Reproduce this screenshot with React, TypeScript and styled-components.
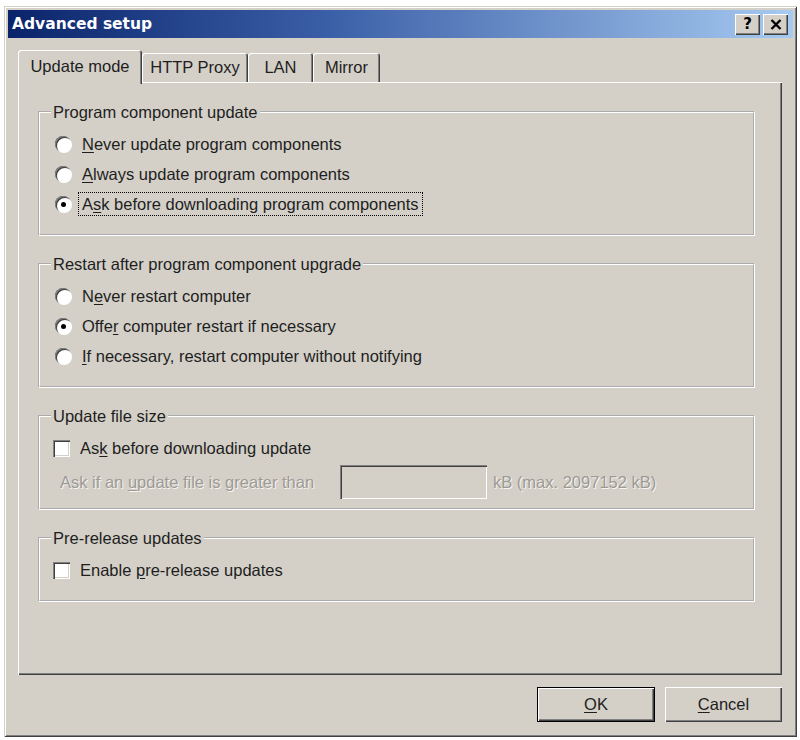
import styled, { createGlobalStyle } from 'styled-components';

const face = '#d4d0c8';
const light = '#ffffff';
const shadow = '#808080';
const darkShadow = '#404040';
const ink = '#1e1e1e';
const grayed = '#9d9a94';

const raised = `inset 1px 1px 0 ${light}, inset -1px -1px 0 ${darkShadow}, inset -2px -2px 0 ${shadow}`;
const sunken = `inset 1px 1px 0 ${shadow}, inset 2px 2px 0 ${darkShadow}, inset -1px -1px 0 ${light}, inset -2px -2px 0 ${face}`;

const GlobalStyle = createGlobalStyle`
  body {
    margin: 0;
    background: #fff;
    font-family: 'Liberation Sans', Arial, sans-serif;
  }
`;

const Page = styled.div`
  padding: 6px 0 0 4px;
`;

const Window = styled.div`
  width: 793px;
  height: 731px;
  box-sizing: border-box;
  padding: 4px;
  display: flex;
  flex-direction: column;
  background: ${face};
  box-shadow: inset 1px 1px 0 ${face}, inset -1px -1px 0 ${darkShadow},
    inset 2px 2px 0 ${light}, inset -2px -2px 0 ${shadow};
`;

const TitleBar = styled.div`
  height: 28px;
  display: flex;
  align-items: center;
  padding: 0 5px 0 4px;
  background: linear-gradient(to right, #0a246a 0%, #3a5ea6 40%, #a6caf0 100%);
`;

const Title = styled.span`
  flex: 1;
  color: #fff;
  font-family: 'DejaVu Sans', Verdana, sans-serif;
  font-weight: bold;
  font-size: 15.5px;
`;

const CaptionButtons = styled.div`
  display: flex;
  gap: 3px;
`;

const CaptionButton = styled.button`
  width: 25px;
  height: 21px;
  padding: 0;
  border: 0;
  display: flex;
  align-items: center;
  justify-content: center;
  background: ${face};
  box-shadow: ${raised};
  color: #000;
  font-family: 'DejaVu Sans', Verdana, sans-serif;
  font-weight: bold;
  font-size: 15px;
`;

const Body = styled.div`
  flex: 1;
  display: flex;
  flex-direction: column;
  padding: 12px 11px 0 10px;
`;

const TabRow = styled.div`
  display: flex;
  align-items: flex-end;
  height: 32px;
`;

const Tab = styled.div<{ $width: number; $active?: boolean }>`
  position: relative;
  z-index: ${(p) => (p.$active ? 1 : 0)};
  width: ${(p) => p.$width}px;
  height: ${(p) => (p.$active ? 34 : 29)}px;
  margin-bottom: ${(p) => (p.$active ? -2 : 0)}px;
  padding-bottom: ${(p) => (p.$active ? 2 : 0)}px;
  box-sizing: border-box;
  display: flex;
  align-items: center;
  justify-content: center;
  background: ${face};
  border-radius: 3px 3px 0 0;
  box-shadow: inset 1px 1px 0 ${light}, inset -1px 0 0 ${darkShadow}, inset -2px 0 0 ${shadow};
  font-size: 16.5px;
  color: ${ink};
`;

const Panel = styled.div`
  height: 593px;
  box-sizing: border-box;
  padding: 20px 27px 0 20px;
  display: flex;
  flex-direction: column;
  gap: 18px;
  box-shadow: ${raised};
`;

const Group = styled.fieldset<{ $padBottom?: number }>`
  margin: 0;
  min-width: 0;
  padding: 7px 15px ${(p) => p.$padBottom ?? 15}px 15px;
  border: 2px groove #fff;
`;

const Legend = styled.legend`
  margin-left: -4px;
  padding: 0 2px;
  line-height: 20px;
  font-size: 16.5px;
  color: ${ink};
`;

const OptionRow = styled.label`
  display: flex;
  align-items: center;
  height: 30px;
`;

const Radio = styled.span<{ $checked?: boolean }>`
  width: 16px;
  height: 16px;
  flex-shrink: 0;
  border-radius: 50%;
  display: flex;
  align-items: center;
  justify-content: center;
  background: #fff;
  box-shadow: inset 1px 1px 0 ${shadow}, inset 2px 2px 0 ${darkShadow}, 1px 1px 0 ${light};

  &::after {
    content: '';
    width: 5px;
    height: 5px;
    border-radius: 50%;
    background: ${(p) => (p.$checked ? '#000' : 'transparent')};
  }
`;

const Checkbox = styled.span`
  width: 17px;
  height: 17px;
  margin-left: -2px;
  flex-shrink: 0;
  background: #fff;
  box-shadow: ${sunken};
`;

const Caption = styled.span<{ $focused?: boolean; $gap: number }>`
  margin-left: ${(p) => p.$gap}px;
  padding: 1px 3px;
  line-height: 20px;
  border: 1px dotted ${(p) => (p.$focused ? '#000' : 'transparent')};
  font-size: 16.5px;
  color: ${ink};
  white-space: nowrap;
`;

const Key = styled.u`
  text-decoration: underline;
  text-underline-offset: 2px;
`;

const ThresholdRow = styled.div`
  display: flex;
  align-items: center;
  height: 34px;
  margin-top: 2px;
`;

const GrayText = styled.span<{ $width?: number }>`
  ${(p) => (p.$width ? `width: ${p.$width}px; padding-left: 5px; box-sizing: border-box;` : 'margin-left: 6px;')}
  font-size: 16.5px;
  color: ${grayed};
  text-shadow: 1px 1px 0 rgba(255, 255, 255, 0.8);
  white-space: nowrap;
`;

const SizeInput = styled.div`
  width: 147px;
  height: 34px;
  background: ${face};
  box-shadow: ${sunken};
`;

const ButtonRow = styled.div`
  display: flex;
  justify-content: flex-end;
  gap: 10px;
  margin-top: 12px;
`;

const DialogButton = styled.button<{ $default?: boolean }>`
  width: ${(p) => (p.$default ? 118 : 117)}px;
  height: 35px;
  padding: 0;
  border: ${(p) => (p.$default ? '1px solid #000' : '0')};
  background: ${face};
  box-shadow: ${raised};
  font-family: 'Liberation Sans', Arial, sans-serif;
  font-size: 16.5px;
  color: ${ink};
`;

type Option = { before: string; key: string; after: string; checked?: boolean; focused?: boolean };

const programOptions: Option[] = [
  { before: '', key: 'N', after: 'ever update program components' },
  { before: '', key: 'A', after: 'lways update program components' },
  { before: 'A', key: 's', after: 'k before downloading program components', checked: true, focused: true },
];

const restartOptions: Option[] = [
  { before: 'N', key: 'e', after: 'ver restart computer' },
  { before: 'Offe', key: 'r', after: ' computer restart if necessary', checked: true },
  { before: '', key: 'I', after: 'f necessary, restart computer without notifying' },
];

const tabs = [
  { label: 'Update mode', width: 124, active: true },
  { label: 'HTTP Proxy', width: 106 },
  { label: 'LAN', width: 65 },
  { label: 'Mirror', width: 67 },
];

const RadioList = ({ options }: { options: Option[] }) => (
  <>
    {options.map((o) => (
      <OptionRow key={o.after}>
        <Radio $checked={o.checked} />
        <Caption $gap={7} $focused={o.focused}>
          {o.before}
          <Key>{o.key}</Key>
          {o.after}
        </Caption>
      </OptionRow>
    ))}
  </>
);

const App = () => (
  <>
    <GlobalStyle />
    <Page>
      <Window>
        <TitleBar>
          <Title>Advanced setup</Title>
          <CaptionButtons>
            <CaptionButton>?</CaptionButton>
            <CaptionButton>
              <svg width="12" height="11" viewBox="0 0 12 11">
                <path d="M1.5 1 L10.5 10 M10.5 1 L1.5 10" stroke="#000" strokeWidth="2.4" />
              </svg>
            </CaptionButton>
          </CaptionButtons>
        </TitleBar>

        <Body>
          <TabRow>
            {tabs.map((t) => (
              <Tab key={t.label} $width={t.width} $active={t.active}>
                {t.label}
              </Tab>
            ))}
          </TabRow>

          <Panel>
            <Group>
              <Legend>Program component update</Legend>
              <RadioList options={programOptions} />
            </Group>

            <Group>
              <Legend>Restart after program component upgrade</Legend>
              <RadioList options={restartOptions} />
            </Group>

            <Group $padBottom={9}>
              <Legend>Update file size</Legend>
              <OptionRow>
                <Checkbox />
                <Caption $gap={6}>
                  As<Key>k</Key> before downloading update
                </Caption>
              </OptionRow>
              <ThresholdRow>
                <GrayText $width={285}>
                  Ask if an <Key>u</Key>pdate file is greater than
                </GrayText>
                <SizeInput />
                <GrayText>kB (max. 2097152 kB)</GrayText>
              </ThresholdRow>
            </Group>

            <Group>
              <Legend>Pre-release updates</Legend>
              <OptionRow>
                <Checkbox />
                <Caption $gap={6}>
                  Enable <Key>p</Key>re-release updates
                </Caption>
              </OptionRow>
            </Group>
          </Panel>

          <ButtonRow>
            <DialogButton $default>
              <Key>O</Key>K
            </DialogButton>
            <DialogButton>
              <Key>C</Key>ancel
            </DialogButton>
          </ButtonRow>
        </Body>
      </Window>
    </Page>
  </>
);

export default App;
